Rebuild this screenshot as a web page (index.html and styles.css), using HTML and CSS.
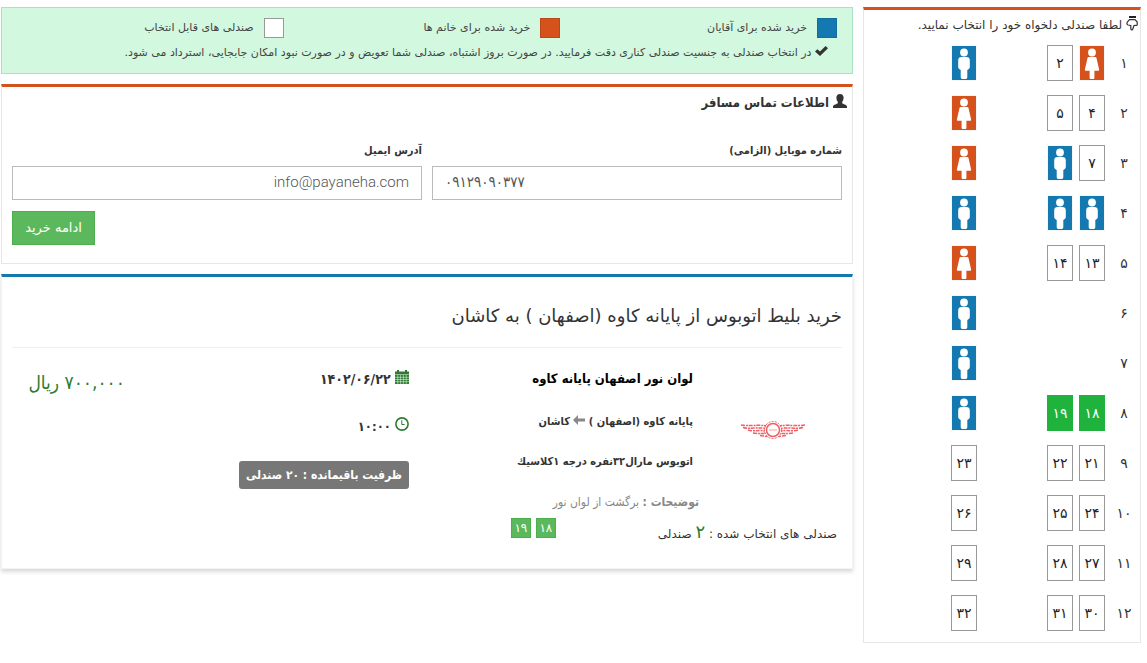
FILE: index.html
```html
<!DOCTYPE html>
<html lang="fa" dir="rtl">
<head>
<meta charset="utf-8">
<meta name="viewport" content="width=device-width, initial-scale=1">
<title>خرید بلیط اتوبوس</title>
<link rel="stylesheet" href="styles.css">
</head>
<body>
<svg class="sprite" aria-hidden="true">
  <symbol id="man" viewBox="0 0 24 34">
    <circle cx="12" cy="6.500" r="3.900"/>
    <path d="M9.500 11h5c2 0 3.300 1.200 3.300 3.200v6.600c0 1.400-.8 2.400-1.700 2.700l-.8.500V31c0 1.300-.6 2-1.600 2h-3.400c-1 0-1.600-.7-1.600-2v-7l-.8-.5c-.9-.3-1.700-1.300-1.700-2.700v-6.600c0-2 1.300-3.200 3.300-3.200z"/>
  </symbol>
  <symbol id="woman" viewBox="0 0 24 34">
    <circle cx="12" cy="6.500" r="3.900"/>
    <path d="M8.800 11h6.400c.7 0 1.100.4 1.300 1l2.600 11.500c.2.800-.2 1.300-1 1.300h-3.700V31.500c0 1-.5 1.500-1.300 1.500h-2.200c-.8 0-1.300-.5-1.300-1.500v-6.700H5.900c-.8 0-1.200-.5-1-1.300L7.500 12c.2-.6.600-1 1.300-1z"/>
  </symbol>
</svg>
<div class="page">
  <aside class="panel seats">
    <h2 class="seats-title">
      <svg class="hand" viewBox="0 0 12 15" aria-hidden="true"><path d="M3 0h7v2H3z" fill="#222"/><path d="M3.500 3.700h5.500L11.200 6v2.500c0 .9-1 1.200-2.100.8L8 9.500 6.800 13c-.4 1.200-2 1-2-.3V9.500L2 9C.7 8.500.6 7 1.500 5.800z" fill="#fff" stroke="#333" stroke-width="1.200"/></svg>
      لطفا صندلی دلخواه خود را انتخاب نمایید.
    </h2>
    <ol class="seat-rows">
      <li class="seat-row"><span class="row-no">۱</span><button class="seat female" type="button" disabled aria-label="خانم"><svg><use href="#woman"/></svg></button><button class="seat" type="button">۲</button><button class="seat male window" type="button" disabled aria-label="آقا"><svg><use href="#man"/></svg></button></li>
      <li class="seat-row"><span class="row-no">۲</span><button class="seat" type="button">۴</button><button class="seat" type="button">۵</button><button class="seat female window" type="button" disabled aria-label="خانم"><svg><use href="#woman"/></svg></button></li>
      <li class="seat-row"><span class="row-no">۳</span><button class="seat" type="button">۷</button><button class="seat male" type="button" disabled aria-label="آقا"><svg><use href="#man"/></svg></button><button class="seat female window" type="button" disabled aria-label="خانم"><svg><use href="#woman"/></svg></button></li>
      <li class="seat-row"><span class="row-no">۴</span><button class="seat male" type="button" disabled aria-label="آقا"><svg><use href="#man"/></svg></button><button class="seat male" type="button" disabled aria-label="آقا"><svg><use href="#man"/></svg></button><button class="seat male window" type="button" disabled aria-label="آقا"><svg><use href="#man"/></svg></button></li>
      <li class="seat-row"><span class="row-no">۵</span><button class="seat" type="button">۱۳</button><button class="seat" type="button">۱۴</button><button class="seat female window" type="button" disabled aria-label="خانم"><svg><use href="#woman"/></svg></button></li>
      <li class="seat-row"><span class="row-no">۶</span><button class="seat male window" type="button" disabled aria-label="آقا"><svg><use href="#man"/></svg></button></li>
      <li class="seat-row"><span class="row-no">۷</span><button class="seat male window" type="button" disabled aria-label="آقا"><svg><use href="#man"/></svg></button></li>
      <li class="seat-row"><span class="row-no">۸</span><button class="seat chosen" type="button" aria-pressed="true">۱۸</button><button class="seat chosen" type="button" aria-pressed="true">۱۹</button><button class="seat male window" type="button" disabled aria-label="آقا"><svg><use href="#man"/></svg></button></li>
      <li class="seat-row"><span class="row-no">۹</span><button class="seat" type="button">۲۱</button><button class="seat" type="button">۲۲</button><button class="seat window" type="button">۲۳</button></li>
      <li class="seat-row"><span class="row-no">۱۰</span><button class="seat" type="button">۲۴</button><button class="seat" type="button">۲۵</button><button class="seat window" type="button">۲۶</button></li>
      <li class="seat-row"><span class="row-no">۱۱</span><button class="seat" type="button">۲۷</button><button class="seat" type="button">۲۸</button><button class="seat window" type="button">۲۹</button></li>
      <li class="seat-row"><span class="row-no">۱۲</span><button class="seat" type="button">۳۰</button><button class="seat" type="button">۳۱</button><button class="seat window" type="button">۳۲</button></li>
    </ol>
  </aside>

  <main class="main">
    <section class="legend">
      <ul class="legend-list">
        <li><span class="swatch blue"></span>خرید شده برای آقایان</li>
        <li><span class="swatch orange"></span>خرید شده برای خانم ها</li>
        <li><span class="swatch"></span>صندلی های قابل انتخاب</li>
      </ul>
      <p class="legend-note"><svg class="tick" viewBox="0 0 13 10" aria-hidden="true"><path d="M0 5.500 2.400 3.200 5 5.600 10.600 0 13 2.300 5 10z"/></svg> در انتخاب صندلی به جنسیت صندلی کناری دقت فرمایید. در صورت بروز اشتباه، صندلی شما تعویض و در صورت نبود امکان جابجایی، استرداد می شود.</p>
    </section>

    <form class="panel contact">
      <h2 class="contact-title"><svg class="user" viewBox="0 0 14 14" aria-hidden="true"><path d="M7 0c2.300 0 3.600 1.500 3.600 3.600 0 1.700-.5 3.300-1.400 4.200v1.400c.9.900 4.200 1.300 4.800 3.300V14H0v-1.500c.6-2 3.900-2.400 4.800-3.300V7.800C3.900 6.900 3.400 5.300 3.400 3.600 3.400 1.500 4.700 0 7 0z"/></svg> اطلاعات تماس مسافر</h2>
      <div class="fields">
        <div class="field"><label for="mobile">شماره موبایل (الزامی)</label><input id="mobile" type="tel" dir="ltr" value="۰۹۱۲۹۰۹۰۳۷۷"></div>
        <div class="field"><label for="email">آدرس ایمیل</label><input id="email" type="email" value="info@payaneha.com"></div>
      </div>
      <button class="submit" type="submit">ادامه خرید</button>
    </form>

    <section class="panel ticket">
      <h1 class="ticket-title">خرید بلیط اتوبوس از پایانه کاوه (اصفهان ) به کاشان</h1>
      <div class="details">
        <div class="logo">
          <svg viewBox="0 0 66 20" role="img" aria-label="لوان نور" fill="none" stroke="#ee5f66">
            <circle cx="33" cy="10" r="6.500" stroke-width="1.500"/>
            <circle cx="33" cy="10" r="8.500" stroke-dasharray="2 1.200"/>
            <path d="M29 10h8" stroke-width="1" opacity=".6"/>
            <g stroke-width="1.500" stroke-dasharray="4 1 2 .7">
              <path d="M1 5c8 1.500 16-.5 25 .8M3 7.600c8 1.800 14-.6 22 .8M8 10.300c6 1.300 11-.4 17 .7M13 13c5 1 8 0 13 .8M20 15.600l8 1"/>
              <path d="M65 5c-8 1.500-16-.5-25 .8M63 7.600c-8 1.800-14-.6-22 .8M58 10.300c-6 1.300-11-.4-17 .7M53 13c-5 1-8 0-13 .8M46 15.600l-8 1"/>
            </g>
          </svg>
        </div>
        <div class="info">
          <p class="company">لوان نور اصفهان پایانه کاوه</p>
          <p class="route">پایانه کاوه (اصفهان ) <svg class="arrow" viewBox="0 0 12 10" aria-hidden="true"><path d="M0 5 5 0v3.500h7v3H5V10z"/></svg> کاشان</p>
          <p class="bus">اتوبوس مارال۳۲نفره درجه ۱کلاسیك</p>
          <p class="note"><b>توضیحات :</b> برگشت از لوان نور</p>
        </div>
        <div class="when">
          <p class="date"><svg class="icon" viewBox="0 0 14 14" aria-hidden="true"><path d="M0 1.500h2V0h2v1.500h6V0h2v1.500h2v3H0zM0 5h14v9H0z"/><path d="M0 7.300h14M0 9.500h14M0 11.700h14M2.800 5v9M5.600 5v9M8.400 5v9M11.200 5v9" stroke="#fff" stroke-width=".5"/></svg> ۱۴۰۲/۰۶/۲۲</p>
          <p class="time"><svg class="icon" viewBox="0 0 14 14" aria-hidden="true"><circle cx="7" cy="7" r="6.100" fill="none" stroke="#2f7a33" stroke-width="1.600"/><path d="M6.800 3.200v4.300h2.800" fill="none" stroke="#2f7a33" stroke-width="1"/></svg> ۱۰:۰۰</p>
          <span class="capacity">ظرفیت باقیمانده : ۲۰ صندلی</span>
        </div>
        <p class="price">۷۰۰,۰۰۰ ریال</p>
      </div>
      <div class="chosen-line">
        <p class="chosen-count">صندلی های انتخاب شده : <b>۲</b> صندلی</p>
        <ul class="chips"><li>۱۸</li><li>۱۹</li></ul>
      </div>
    </section>
  </main>
</div>
</body>
</html>
```
FILE: styles.css
```css
* { box-sizing: border-box; }
body {
  margin: 0;
  background: #fff;
  color: #333;
  font-family: "DejaVu Sans", sans-serif;
  font-size: 12px;
  line-height: 20px;
}
h1, h2, p, ul, ol { margin: 0; padding: 0; }
ul, ol { list-style: none; }
button, input { font-family: inherit; }
.sprite { display: none; }

.page { display: flex; align-items: flex-start; gap: 10px; padding: 7px 6px 20px 1px; }
.main { flex: 1; min-width: 0; display: grid; gap: 10px; }
.panel { border: 1px solid #e7e7e7; border-top: 3px solid #d5521c; background: #fff; }

.seats { flex: 0 0 278px; padding-bottom: 11px; }
.seats-title { padding: 5px 2px 0; margin-bottom: 10px; font-size: 12px; font-weight: 400; white-space: nowrap; }
.hand { width: 12px; height: 15px; vertical-align: -2px; }
.seat-rows { display: grid; gap: 14px; }
.seat-row { display: grid; grid-template-columns: 32px 32px 32px 64px 32px; align-items: center; justify-items: center; height: 36px; }
.row-no { font-size: 14px; }
.seat { width: 26px; height: 36px; padding: 0; border: 1px solid #999; background: #fff; color: #222; font-size: 14px; }
.seat svg { display: block; width: 24px; height: 34px; fill: #fff; }
.seat.window { grid-column: 5; }
.seat.male, .seat.female { border-color: #f3f5f7; }
.seat.male { background: #1379b0; }
.seat.female { background: #d5521c; }
.seat.chosen { border-color: #1fb23c; background: #1fb23c; color: #fff; }

.legend { padding: 10px 15px 10px 5px; border: 1px solid #abdfc6; background: #d2f8df; color: #444; font-size: 11px; }
.legend-list { display: grid; grid-template-columns: repeat(3, 1fr); }
.legend-list li { display: flex; gap: 10px; }
.swatch { width: 20px; height: 20px; border: 1px solid #999; background: #fff; }
.swatch.blue { border-color: #126c9e; background: #1379b0; }
.swatch.orange { border-color: #bb4818; background: #d5521c; }
.legend-note { margin: 5px 9px 0 0; white-space: nowrap; }
.tick { width: 13px; height: 10px; fill: #333; }

.contact, .details { font-family: "DejaVu Sans Condensed", "DejaVu Sans", sans-serif; }
.contact { padding: 6px 10px 18px; }
.contact-title { margin: 0 -5px 28px 0; font-size: 13px; }
.user { width: 14px; height: 14px; fill: #333; vertical-align: -1px; }
.fields { display: grid; grid-template-columns: 1fr 1fr; gap: 10px; margin-bottom: 11px; }
.field { display: grid; gap: 5px; }
.field label { font-size: 11px; font-weight: 700; }
.field input { width: 100%; height: 34px; padding: 4px 12px 6px; border: 1px solid #bbb; border-radius: 0; background: #fff; color: #555; font-family: Roboto, "DejaVu Sans Condensed", sans-serif; font-size: 15px; font-weight: 300; }
.submit { display: block; min-width: 83px; height: 34px; margin-right: auto; padding: 0 12px 2px; border: 1px solid #4cae4c; background: #5cb85c; color: #fff; font-family: "DejaVu Sans", sans-serif; font-size: 13px; }

.ticket { padding: 24px 10px 24px; border-color: #f3f3f3; border-top-color: #1379b0; box-shadow: 0 3px 4px rgba(0, 0, 0, .15); }
.ticket-title { padding-bottom: 16px; border-bottom: 1px solid #eee; font-size: 18px; font-weight: 400; line-height: 30px; white-space: nowrap; }
.details { display: grid; grid-template-columns: 139fr 284fr 284fr 123fr; padding-top: 21px; }
.details > div, .price { padding-right: 10px; white-space: nowrap; }
.details .logo { padding: 51px 0 0; text-align: center; }
.logo svg { width: 66px; height: 20px; }
.company { color: #000; font-size: 13px; font-weight: 700; margin-bottom: 23px; }
.route, .bus { margin-bottom: 20px; font-size: 11px; font-weight: 700; }
.arrow { width: 12px; height: 10px; fill: #888; }
.info .note { margin-right: -6px; color: #888; font-size: 12px; }
.when { font-weight: 700; font-size: 14px; }
.date { margin-bottom: 28px; }
.time { margin-bottom: 24px; font-size: 13px; }
.icon { width: 14px; height: 14px; fill: #2f7a33; }
.capacity { display: inline-block; padding: 4px 7px; border-radius: 3px; background: #777; color: #fff; font-size: 12px; }
.price { color: #2f7a33; font-size: 19px; line-height: 26px; }
.chosen-line { display: flex; justify-content: flex-start; gap: 102px; padding: 6px 5px 0; }
.chosen-count { padding-top: 4px; font-size: 12px; white-space: nowrap; }
.chosen-count b { color: #2f7a33; font-size: 18px; font-weight: 400; }
.chips { display: flex; gap: 5px; }
.chips li { width: 20px; height: 20px; border: 1px solid #4cae4c; background: #5cb85c; color: #fff; text-align: center; line-height: 18px; }
```
